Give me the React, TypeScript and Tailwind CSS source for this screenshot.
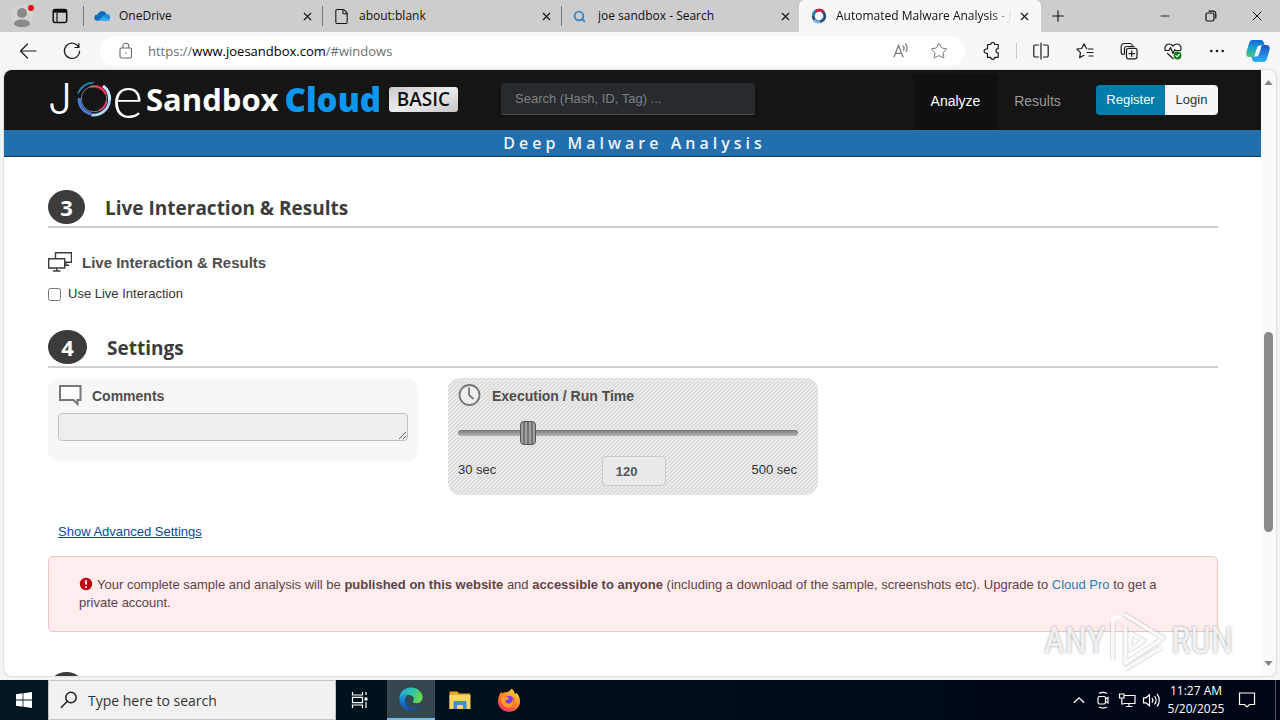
import type { ReactNode } from "react";
import { ArrowLeft, X, Plus, Minus, Star, File, Search } from "lucide-react";

const UI = "font-['Open_Sans','Noto_Sans',sans-serif]";

function OneDriveIcon() {
  return (
    <svg viewBox="0 0 16 16" className="size-4">
      <path d="M3.6 6.5A4.6 4.6 0 0 1 12.3 6l-3 4.5-5 2.3H3.4A3.1 3.1 0 0 1 3.6 6.500z" fill="#0f6cbd" />
      <path d="M12.300 6a3.400 3.400 0 0 1 .6 6.900H4L9 7.400z" fill="#1d8fe0" />
      <path d="M3.400 12.900 9.200 9l6.200 2.300a2.600 2.600 0 0 1-2.300 1.600z" fill="#35b0ee" />
    </svg>
  );
}

function RingIcon({ className }: { className?: string }) {
  return (
    <svg viewBox="0 0 36 36" className={className} fill="none" strokeLinecap="butt">
      <path d="M2 12.500A17 17 0 0 1 17.500 1.500" stroke="#2f7aa6" strokeWidth="2" />
      <path d="M3.300 17A14.800 14.800 0 0 0 15.500 33" stroke="#4a78cf" strokeWidth="3.200" />
      <path d="M15.500 34A16 16 0 0 0 33.500 19" stroke="#a9d4f5" strokeWidth="2.800" />
      <path d="M27 5A16 16 0 0 1 33.500 19" stroke="#bfe9ff" strokeWidth="3.200" />
      <path d="M14 6.200A12.500 12.500 0 0 1 30 13" stroke="#e3102e" strokeWidth="2.800" />
      <path d="M30.500 20A12.500 12.500 0 0 1 23 29.500" stroke="#d21134" strokeWidth="2.200" />
      <circle cx="18" cy="18" r="12.800" stroke="#8fa9cf" strokeWidth=".7" />
    </svg>
  );
}

function TabRing() {
  return (
    <svg viewBox="0 0 16 16" className="size-4" fill="none" strokeWidth="2.800">
      <circle cx="8" cy="8" r="5.800" stroke="#2c4a7d" />
      <path d="M2.300 8A5.800 5.800 0 0 1 5 3" stroke="#2b87b0" />
      <path d="M5 3a5.800 5.800 0 0 1 7.500 1" stroke="#d81f3f" />
      <path d="M3 12a5.800 5.800 0 0 0 6 1.700" stroke="#7fb2e6" />
    </svg>
  );
}

function Tab({ icon, title, active, divider }: { icon: ReactNode; title: string; active?: boolean; divider?: boolean }) {
  return (
    <div
      className={
        active
          ? "flex h-8 w-[242px] items-center rounded-t-md bg-[#f7f7f7] pr-[9px] pl-3"
          : divider
            ? "flex h-5 w-[239px] items-center border-r border-[#7b7876] pr-[7px] pl-[10px]"
            : "flex h-5 w-[237px] items-center pr-[6px] pl-[11px]"
      }
    >
      {icon}
      <span
        className={
          active
            ? "ml-[9px] flex-1 overflow-hidden whitespace-nowrap [mask-image:linear-gradient(to_right,#000_88%,transparent)]"
            : "ml-[9px] flex-1 overflow-hidden whitespace-nowrap"
        }
      >
        {title}
      </span>
      <button aria-label={`Close ${title}`} className="ml-1 flex size-4 items-center justify-center">
        <X size={13} strokeWidth={2} />
      </button>
    </div>
  );
}

function TabStrip() {
  return (
    <div className="flex h-8 shrink-0 items-center bg-[#cdcdcd] text-[12px] text-[#111]">
      <button aria-label="Profile" className="ml-2 flex w-7 items-center justify-center">
        <svg viewBox="0 0 28 28" className="size-7">
          <circle cx="14" cy="14" r="11" fill="#d5d3d2" />
          <circle cx="14" cy="11" r="5" fill="#8b8987" />
          <path d="M6 22.500c0-3.500 3-5 8-5s8 1.500 8 5c-2 2-5 2.500-8 2.500s-6-.5-8-2.500z" fill="#8b8987" />
          <circle cx="23" cy="6" r="3" fill="#e30613" />
        </svg>
      </button>
      <button aria-label="Tab actions" className="mr-[15px] ml-4 flex items-center">
        <svg viewBox="0 0 16 16" className="size-4" fill="none" stroke="#111" strokeWidth="1.500">
          <rect x="1.200" y="1.500" width="13.500" height="13" rx="2" />
          <path d="M1.500 3.200h13" strokeWidth="3" />
          <path d="M5 5v9" strokeWidth="1.200" />
        </svg>
      </button>
      <div className="flex items-center border-l border-[#7b7876]">
        <Tab divider icon={<OneDriveIcon />} title="OneDrive" />
        <Tab divider icon={<File size={17} strokeWidth={1.5} />} title="about:blank" />
        <Tab icon={<Search size={13} strokeWidth={3.5} className="mr-[3px] text-[#3d86c6]" />} title="joe sandbox - Search" />
      </div>
      <Tab active icon={<TabRing />} title="Automated Malware Analysis - Joe Sandbox" />
      <button aria-label="New tab" className="ml-2">
        <Plus size={18} strokeWidth={1.500} />
      </button>
      <div className="ml-auto flex h-full">
        <button aria-label="Minimize" className="flex w-[46px] items-center justify-center">
          <Minus size={14} strokeWidth={1.500} />
        </button>
        <button aria-label="Restore" className="flex w-[46px] items-center justify-center">
          <svg viewBox="0 0 12 12" className="size-3" fill="none" stroke="#111" strokeWidth="1.200">
            <rect x="1" y="3" width="8" height="8" rx="1.500" />
            <path d="M3.500 1.200h5A2.300 2.300 0 0 1 10.800 3.500v5" />
          </svg>
        </button>
        <button aria-label="Close" className="flex w-[46px] items-center justify-center">
          <X size={16} strokeWidth={1.500} />
        </button>
      </div>
    </div>
  );
}

function ToolButton({ label, children }: { label: string; children: ReactNode }) {
  return (
    <button aria-label={label} className="flex w-11 items-center justify-center">
      <svg viewBox="0 0 18 18" className="size-[18px]" fill="none" stroke="#1b1b1b" strokeWidth="1.200" strokeLinejoin="round" strokeLinecap="round">
        {children}
      </svg>
    </button>
  );
}

function Toolbar() {
  return (
    <div className="flex h-[38px] shrink-0 items-center bg-[#f7f7f7]">
      <button aria-label="Back" className="ml-[6px] flex w-11 justify-center">
        <svg viewBox="0 0 18 18" className="size-[18px]" fill="none" stroke="#1b1b1b" strokeWidth="1.200" strokeLinejoin="round" strokeLinecap="round">
          <path d="M17 9H1.500M8.500 2 1.500 9l7 7" />
        </svg>
      </button>
      <ToolButton label="Reload">
        <path d="M15.700 5.200A7.600 7.600 0 1 0 16.600 9M15.900 1.500v4h-4" />
      </ToolButton>
      <div className="ml-[6px] flex h-[30px] flex-1 items-center rounded-full bg-white pr-[17px] pl-[18px]">
        <svg viewBox="0 0 16 18" className="h-[18px] w-4" fill="none" stroke="#6b6b6b" strokeWidth="1.100">
          <rect x="2" y="6" width="11.500" height="10" rx="1.500" />
          <path d="M4.800 6V4.300a3 3 0 0 1 6 0V6" />
          <circle cx="7.800" cy="11" r=".8" fill="#6b6b6b" stroke="none" />
        </svg>
        <div className="ml-[14px] flex-1 text-[13px] leading-[18px] text-[#707070]">
          https://<span className="text-black">www.joesandbox.com</span>/#windows
        </div>
        <button aria-label="Read aloud" className="mr-5 flex text-[#777]">
          <svg viewBox="0 0 18 18" className="size-[18px]" fill="none" stroke="currentColor" strokeWidth="1.200" strokeLinecap="round">
            <path d="M2 15 6.500 3.500 11 15M3.500 11.300h6M11 4c1.300 1 1.300 3 .5 4.200M13.500 2c2 2 2 5.500.5 7.500" />
          </svg>
        </button>
        <button aria-label="Favorite" className="text-[#6f6f6f]">
          <Star size={18} strokeWidth={1.300} />
        </button>
      </div>
      <div className="ml-[5px] flex items-center">
        <ToolButton label="Extensions">
          <path d="M5 2.500h2.700a2 2 0 0 1 4 0h3.500v4a2 2 0 0 0 0 4.300v4.500h-3.500a2 2 0 0 1-4 0H4.500v-4H3.300a2.100 2.100 0 0 1 0-4.300H4.500V3z" />
        </ToolButton>
        <span className="mx-[2px] h-4 w-px bg-[#c9c9c9]" />
        <ToolButton label="Split screen">
          <path d="M6.500 3H3a1.200 1.200 0 0 0-1.200 1.200v9.600A1.200 1.200 0 0 0 3 15h3.500M11.500 3H15a1.200 1.200 0 0 1 1.200 1.200v9.600A1.200 1.200 0 0 1 15 15h-3.500M9 1v16" />
        </ToolButton>
        <ToolButton label="Favorites">
          <path d="M10.500 6.500 8 1.800 5.800 6.500l-4.900.6 3.600 3.500-.9 5 4.400-2.300M12 7h5M11 10.500h6M13 14h4" />
        </ToolButton>
        <ToolButton label="Collections">
          <path d="M3.500 12.500A2.500 2.500 0 0 1 1.200 10V4.500A3 3 0 0 1 4.200 1.500H10a2.500 2.500 0 0 1 2.400 2M4.500 12V6.500a2 2 0 0 1 2-2H14" />
          <rect x="6.500" y="6.300" width="10.500" height="10.500" rx="2" />
          <path d="M11.700 8.800v5.600M9 11.600h5.500" />
        </ToolButton>
        <ToolButton label="Browser essentials">
          <path d="M1.500 8.500C0 5 2 2 5 2c1.700 0 3 .8 4 2 1-1.200 2.300-2 4-2 3 0 5 3 3.500 6.500M3.500 11.500 9 16.500M1 8.500h4l1.500-3 2.500 6 1.800-4 .8 1h5" />
          <circle cx="13.500" cy="13.500" r="3.900" fill="#107c10" stroke="none" />
          <path d="m11.800 13.600 1.200 1.200 2.300-2.400" stroke="#fff" />
        </ToolButton>
        <ToolButton label="Settings and more">
          <g fill="#1b1b1b" stroke="none">
            <circle cx="3.300" cy="9" r="1.300" />
            <circle cx="9" cy="9" r="1.300" />
            <circle cx="14.700" cy="9" r="1.300" />
          </g>
        </ToolButton>
      </div>
      <button aria-label="Copilot" className="mr-[10px] ml-[7px]">
        <svg viewBox="0 0 24 24" className="size-6">
          <defs>
            <linearGradient id="cpA" x1="0" y1="0" x2="0" y2="1">
              <stop offset="0" stopColor="#1565d8" />
              <stop offset=".5" stopColor="#18a5c9" />
              <stop offset="1" stopColor="#54c46d" />
            </linearGradient>
            <linearGradient id="cpB" x1="0" y1="0" x2="0" y2="1">
              <stop offset="0" stopColor="#1e4fc2" />
              <stop offset="1" stopColor="#29b2fb" />
            </linearGradient>
          </defs>
          <path d="M6.500 1h8.500c1.500 0 2.300 1 2.800 2.500l.8 3H14c-1.500 0-2.300.8-2.800 2.300L9 15.500c-.6 1.800-1.500 2.500-3 2.500H3.500C.5 18-.2 15.500.6 12.500L3 4.500C3.700 2 4.800 1 6.500 1z" fill="url(#cpA)" />
          <path d="M17.500 23H9c-1.500 0-2.300-1-2.800-2.500l-.8-3H10c1.500 0 2.300-.8 2.800-2.300L15 8.500c.6-1.800 1.500-2.500 3-2.500h2.500c3 0 3.700 2.500 2.900 5.500L21 19.500c-.7 2.500-1.800 3.500-3.500 3.500z" fill="url(#cpB)" />
          <path d="m11.300 8.500 3.700-.1-2.200 7.100-3.800.1z" fill="#f7f7f7" />
        </svg>
      </button>
    </div>
  );
}

function SiteHeader() {
  return (
    <header className="shrink-0">
      <div className="flex h-[60px] bg-[#151515] pr-[43px] pl-11">
        <a href="#home" className="flex h-[58px] w-[410px] items-center whitespace-nowrap" aria-label="Joe Sandbox Cloud Basic">
          <span className="w-[28px] font-['Inter',sans-serif] text-[42px] leading-none font-light text-white">J</span>
          <RingIcon className="size-9" />
          <span className="w-[34px] pb-2 font-['Lato',sans-serif] text-[60px] leading-none font-light text-white">e</span>
          <span className="font-['Open_Sans',sans-serif] text-[31px] leading-none font-bold text-white">Sandbox</span>
          <span className="ml-[6px] font-['Open_Sans',sans-serif] text-[33px] leading-none font-extrabold text-[#0d96ee]">Cloud</span>
          <span className="ml-auto flex h-[25px] items-center rounded-[3px] bg-linear-to-br from-[#c9c9c9] via-[#ededed] to-[#c4c4c4] px-2 font-['Open_Sans',sans-serif] text-[19px] font-semibold text-[#111]">
            BASIC
          </span>
        </a>
        <input
          aria-label="Search"
          placeholder="Search (Hash, ID, Tag) ..."
          className="mt-[13px] ml-[43px] h-8 w-[254px] rounded-[3px] border-b border-[#4a4d50] bg-[#272b2e] px-[14px] text-[13px] text-white placeholder:text-[#7e8184]"
        />
        <nav className="ml-auto flex text-[14px]">
          <a href="#analyze" className="mt-1 flex w-[85px] items-center justify-center bg-[#101010] pb-px text-white">
            Analyze
          </a>
          <a href="#results" className="mt-1 flex w-[79px] items-center justify-center pb-px text-[#999]">
            Results
          </a>
        </nav>
        <div className="mt-[15px] ml-[19px] flex h-[30px] overflow-hidden rounded text-[13px]">
          <button className="w-[69px] bg-[#007da8] text-white">Register</button>
          <button className="w-[53px] bg-[#f5f5f5] text-[#333]">Login</button>
        </div>
      </div>
      <div className="flex h-[27px] items-center justify-center border-b border-[#16344c] bg-[#216fae] pl-1 font-['Open_Sans',sans-serif] text-[16px] font-semibold tracking-[4px] text-[#eaf4fb]">
        Deep Malware Analysis
      </div>
    </header>
  );
}

function StepHeading({ step, wide, children }: { step: string; wide?: boolean; children: ReactNode }) {
  return (
    <h2 className="flex h-[38px] items-start border-b-2 border-[#d0d0d0] font-['Open_Sans',sans-serif] text-[19px] font-bold text-[#3c3c3c]">
      <span
        className={
          wide
            ? "flex h-[34px] w-[39px] items-center justify-center rounded-[50%] bg-[#3c3c3c] text-[22px] text-white"
            : "flex h-[34px] w-[37px] items-center justify-center rounded-[50%] bg-[#3c3c3c] text-[22px] text-white"
        }
      >
        {step}
      </span>
      <span className="ml-5 leading-[37px]">{children}</span>
    </h2>
  );
}

function Settings() {
  return (
    <div className="mt-[10px] flex items-start gap-[30px]">
      <div className="h-[84px] w-[370px] rounded-xl bg-[#f7f7f7] px-[10px] pt-[6px]">
        <label htmlFor="comments" className="flex h-6 items-center gap-[10px] text-[14px] font-bold text-[#4d4d4d]">
          <svg viewBox="0 0 24 24" className="size-6" fill="#fff" stroke="#777" strokeWidth="2">
            <path d="M2 2h20.500v14h-3v4L15.500 16H2z" />
          </svg>
          Comments
        </label>
        <textarea id="comments" className="mt-[5px] block h-7 w-full resize rounded border border-[#c3c3c3] bg-[#eee]" />
      </div>
      <div className="h-[117px] w-[370px] rounded-xl bg-[linear-gradient(135deg,#d2d2d2_0%,#d2d2d2_13%,#e9e9e9_13%,#e9e9e9_50%,#d2d2d2_50%,#d2d2d2_63%,#e9e9e9_63%)] bg-[length:4px_4px] px-[10px] pt-[5px]">
        <label htmlFor="runtime" className="flex h-6 items-center gap-[10px] text-[14px] font-bold text-[#4d4d4d]">
          <svg viewBox="0 0 24 24" className="size-6" fill="none" stroke="#777" strokeWidth="1.800">
            <circle cx="11.500" cy="12" r="10" fill="#eee" />
            <path d="M11 4.500v7.500l4.500 4" />
          </svg>
          <span className="pt-[3px]">Execution / Run Time</span>
        </label>
        <input
          id="runtime"
          type="range"
          min={30}
          max={500}
          defaultValue={120}
          className="mt-[14px] block h-6 w-[340px] appearance-none bg-transparent [&::-webkit-slider-runnable-track]:h-[6px] [&::-webkit-slider-runnable-track]:rounded-full [&::-webkit-slider-runnable-track]:bg-linear-to-b [&::-webkit-slider-runnable-track]:from-[#777] [&::-webkit-slider-runnable-track]:to-[#b5b5b5] [&::-webkit-slider-thumb]:-mt-[9px] [&::-webkit-slider-thumb]:h-6 [&::-webkit-slider-thumb]:w-4 [&::-webkit-slider-thumb]:appearance-none [&::-webkit-slider-thumb]:rounded [&::-webkit-slider-thumb]:border [&::-webkit-slider-thumb]:border-[#555] [&::-webkit-slider-thumb]:bg-[repeating-linear-gradient(to_right,#a0a0a0_0,#a0a0a0_2px,#747474_2px,#747474_4px)]"
        />
        <div className="mt-[11px] flex items-start justify-between pr-[11px] text-[13px] text-[#333]">
          <span className="w-[54px] pt-1">30 sec</span>
          <input
            aria-label="Run time in seconds"
            defaultValue="120"
            className="ml-[38px] h-[30px] w-16 rounded border border-[#c9c9c9] bg-[#e9e9e9] px-[13px] text-[13px] font-bold text-[#555]"
          />
          <span className="ml-[34px] pt-1">500 sec</span>
        </div>
      </div>
    </div>
  );
}

function Page() {
  return (
    <div className="flex min-h-0 min-w-0 flex-1 flex-col overflow-hidden">
      <SiteHeader />
      <main className="pt-[33px] pr-[43px] pl-11 text-[13px] text-[#333]">
        <StepHeading step="3">Live Interaction &amp; Results</StepHeading>
        <h3 className="mt-[23px] flex h-6 items-center gap-[10px] text-[15px] font-bold text-[#4d4d4d]">
          <svg viewBox="0 0 24 24" className="size-6" fill="#fff" stroke="#3c3c3c" strokeWidth="1.400">
            <path d="M7.500 1.700h16v9.600h-16zM18 11v3M14 14.200h7" />
            <path d="M.7 7.700h16v9.300h-16zM8.700 17v2.500M5 20h7.500" />
          </svg>
          Live Interaction &amp; Results
        </h3>
        <label className="mt-[9px] flex h-5 items-center gap-[7px]">
          <input type="checkbox" className="size-[13px]" />
          Use Live Interaction
        </label>
        <div className="mt-[26px]">
          <StepHeading step="4" wide>
            Settings
          </StepHeading>
        </div>
        <Settings />
        <div className="mt-[27px] h-5 pl-[10px] leading-5">
          <a href="#advanced" className="text-[#0a4a9a] underline">
            Show Advanced Settings
          </a>
        </div>
        <p className="mt-[14px] rounded-[5px] border border-[#ebc8c8] bg-[#ffeded] px-[30px] py-[19px] leading-[18px] text-[#5e4247]">
          <svg viewBox="0 0 14 14" className="mr-1 inline-block size-[14px] align-[-2px]">
            <circle cx="7" cy="7" r="6.200" fill="#c00010" />
            <path d="M7 3.200v4.300M7 9.200v1.800" stroke="#fff" strokeWidth="1.800" />
          </svg>
          Your complete sample and analysis will be <b>published on this website</b> and <b>accessible to anyone</b> (including a
          download of the sample, screenshots etc). Upgrade to{" "}
          <a href="#pro" className="text-[#1f7fb5]">
            Cloud Pro
          </a>{" "}
          to get a private account.
        </p>
        <div className="mt-10">
          <StepHeading step="5">Submit</StepHeading>
        </div>
      </main>
    </div>
  );
}

function Scrollbar() {
  return (
    <div className="flex w-[15px] shrink-0 flex-col items-center bg-[#fafafa] pt-[10px] pb-[10px]">
      <svg viewBox="0 0 10 6" className="h-[5px] w-[9px]">
        <path d="M0 6 5 0l5 6z" fill="#858585" />
      </svg>
      <span className="mt-[247px] h-[200px] w-[9px] rounded-full bg-[#8b8b8b]" />
      <svg viewBox="0 0 10 6" className="mt-auto h-[5px] w-[9px]">
        <path d="M0 0h10L5 6z" fill="#858585" />
      </svg>
    </div>
  );
}

function Watermark() {
  return (
    <div className="pointer-events-none absolute right-[43px] bottom-[3px] flex items-center gap-1 font-['Roboto_Condensed','Open_Sans_Condensed','Noto_Sans_Condensed','Roboto',sans-serif] text-[36px] leading-none text-white/80 [text-shadow:0_0_3px_#999]">
      <span>ANY</span>
      <svg viewBox="0 0 60 64" className="h-16 w-[58px]" fill="none" strokeWidth="4" strokeLinejoin="round">
        <g stroke="#000" strokeOpacity=".12" strokeWidth="6">
          <path d="M15 4 56 29 17 55V16M4 12v40M17 61l38-23M22 24l14 8-14 9z" />
        </g>
        <g stroke="#fff" strokeOpacity=".8">
          <path d="M15 4 56 29 17 55V16M22 24l14 8-14 9z" />
          <path d="M4 52V12c0-5 4-6 8-4M17 61l38-23" />
        </g>
      </svg>
      <span>RUN</span>
    </div>
  );
}

function EdgeIcon() {
  return (
    <svg viewBox="0 0 24 24" className="size-6">
      <defs>
        <linearGradient id="edA" x1="0" y1="0" x2="1" y2="0.300">
          <stop offset="0" stopColor="#2aa8e0" />
          <stop offset=".6" stopColor="#2fc4a8" />
          <stop offset="1" stopColor="#66d94e" />
        </linearGradient>
        <linearGradient id="edB" x1="0" y1="0" x2="0" y2="1">
          <stop offset="0" stopColor="#1b9de0" />
          <stop offset="1" stopColor="#0f56a8" />
        </linearGradient>
      </defs>
      <path d="M.5 11C1 4.500 6 .5 12 .5c7 0 11.500 5 11.500 10 0 4-3 5.700-6 5.700-2.500 0-4-.9-3.500-1.700 1.500-2 1-6.500-4-6.500C6 8 3 9 .5 11z" fill="url(#edA)" />
      <path d="M.5 12.500C1 8.500 5 6 9.500 7.500 6 9 5 13 6.500 17c1.300 3.500 4.500 5.800 8 6-7.500 2-14-3.500-14-10.500z" fill="url(#edB)" />
      <path d="M8.500 10.500C6 16 10 22 16 20.500c2-.4 4-1.500 5.500-2.500-2 3.500-6 5.500-9 5.500C7.500 22 4.500 16 6.500 12c.5-1 1-1.500 2-1.500z" fill="#164f9b" />
    </svg>
  );
}

function Taskbar() {
  return (
    <footer className="flex h-10 shrink-0 items-center bg-linear-to-r from-[#001720] to-[#000515] text-white">
      <button aria-label="Start" className="flex w-12 justify-center">
        <svg viewBox="0 0 16 16" className="size-4" fill="#fff">
          <path d="M0 2.200 6.600 1.300v6.300H0zM7.400 1.200 16 0v7.600H7.400zM0 8.400h6.600v6.300L0 13.800zM7.400 8.400H16V16l-8.600-1.200z" />
        </svg>
      </button>
      <label className="flex h-full w-72 items-center border border-[#c4c4c4] bg-[#f1f1f1] pl-[11px] text-[#222]">
        <svg viewBox="0 0 18 18" className="size-[18px]" fill="none" stroke="#222" strokeWidth="1.500">
          <circle cx="11" cy="6.500" r="5.200" />
          <path d="M7.300 10.200 1 16.800" />
        </svg>
        <input
          aria-label="Taskbar search"
          placeholder="Type here to search"
          className="ml-[10px] w-0 flex-1 bg-transparent text-[14px] placeholder:text-[#333]"
        />
      </label>
      <button aria-label="Task view" className="flex w-12 justify-center">
        <svg viewBox="0 0 18 18" className="size-[18px]" fill="none" stroke="#fff" strokeWidth="1.200">
          <path d="M1.500 1v3h10V1M1.500 17v-3h10v3M1.500 6.300h10v5.400h-10zM15 1v3M15 11v6" />
          <path d="M13.500 6.500h3v3h-3z" fill="#fff" stroke="none" />
        </svg>
      </button>
      <button aria-label="Microsoft Edge" className="ml-[3px] flex h-full w-12 items-center justify-center border-b-2 border-[#76b9ed] bg-[#35474f]">
        <EdgeIcon />
      </button>
      <button aria-label="File Explorer" className="flex w-[49px] justify-center">
        <svg viewBox="0 0 22 20" className="h-5 w-[22px]">
          <path d="M.5 1.500h8l1.500 2h11V19H.5z" fill="#e8a921" />
          <path d="M.5 5h21v14H.5z" fill="#fcd462" />
          <path d="M4.500 19v-6.500c0-1 .6-1.500 1.500-1.500h10c.9 0 1.500.5 1.500 1.500V19h-3.500v-4h-6v4z" fill="#3f8fce" />
        </svg>
      </button>
      <button aria-label="Firefox" className="flex w-[49px] justify-center">
        <svg viewBox="0 0 24 24" className="size-6">
          <defs>
            <linearGradient id="ffA" x1=".8" y1="0" x2=".2" y2="1">
              <stop offset="0" stopColor="#ffe14a" />
              <stop offset=".45" stopColor="#ff8a1e" />
              <stop offset="1" stopColor="#f0246e" />
            </linearGradient>
          </defs>
          <path d="M14.500.5c2 1.500 3 3.500 3.500 5.500 1-.2 1.500-.5 1.500-1.500 2.500 3 3.500 6 3.500 9A11 10.500 0 0 1 1 13.500C1 9 2.500 6 4.500 3.500c0 1 .2 1.500.7 2C6.500 4.500 8 4 9.500 4.200 10.500 4.200 13.500 3 14.500.5z" fill="url(#ffA)" />
          <circle cx="12" cy="12.800" r="5" fill="#7a3fe0" />
          <path d="M4 9c3-1.500 5-1 7 .5 1.500 1 .5 2.300-1.500 2.500-1.500.1-1.500 3 1.500 3.500 3 .5 5-2 4.500-5 2 2 1.500 8.500-4 9C6.500 20 3.500 15 4 9z" fill="#ff9a22" />
        </svg>
      </button>
      <div className="ml-auto flex items-center">
        <svg viewBox="0 0 12 8" className="h-2 w-3" fill="none" stroke="#fff" strokeWidth="1.300">
          <path d="m.8 6.800 5.200-5 5.200 5" />
        </svg>
        <svg viewBox="0 0 18 18" className="ml-[9px] size-[18px]" fill="none" stroke="#fff" strokeWidth="1.200">
          <rect x="4" y="5.500" width="7.500" height="7.500" rx="1.500" />
          <path d="m11.500 8 2.500-1.500v5.500l-2.500-1.500M5 2.500c2.300-1.300 5.700-1.300 8 0M5 16c2.300 1.200 5.700 1.200 8 0" />
        </svg>
        <svg viewBox="0 0 18 18" className="ml-[6px] size-[18px]" fill="none" stroke="#fff" strokeWidth="1.200">
          <path d="M6 4.500h11v8H5.500M11 12.500v3M8 15.500h6.500M1.500 3h4.500v4H1.500zM3.800 7v6h2" />
        </svg>
        <svg viewBox="0 0 18 18" className="ml-[6px] size-[18px]" fill="none" stroke="#fff" strokeWidth="1.200">
          <path d="M1.500 6.800h2.500l3.500-3v11l-3.500-3H1.500zM10 7c1 1.300 1 3.300 0 4.600M12.500 5c2 2.500 2 6 0 8.500M15 3c3 3.500 3 9 0 12.500" />
        </svg>
        <div className="ml-1 w-[64px] text-center text-[12px] leading-[18px] whitespace-nowrap">
          11:27 AM
          <br />
          5/20/2025
        </div>
        <button aria-label="Notifications" className="mr-[19px] ml-[10px] flex">
          <svg viewBox="0 0 18 18" className="size-[18px]" fill="none" stroke="#fff" strokeWidth="1.200">
            <path d="M1.500 2h15v11.500h-5L9 16l-2.500-2.500h-5z" />
          </svg>
        </button>
        <span className="mr-1 h-10 w-px bg-[#4a5560]" />
      </div>
    </footer>
  );
}

export default function App() {
  return (
    <div className="flex h-screen flex-col overflow-hidden bg-[#f3f4f6]">
      <div className={`${UI} shrink-0`}>
        <TabStrip />
        <Toolbar />
      </div>
      <div className="relative mx-1 mb-1 flex min-h-0 flex-1 overflow-hidden rounded-lg bg-white font-['Liberation_Sans',Arial,sans-serif] shadow-[0_0_2px_#aaa]">
        <Page />
        <Scrollbar />
        <Watermark />
      </div>
      <div className={`${UI} shrink-0`}>
        <Taskbar />
      </div>
    </div>
  );
}
